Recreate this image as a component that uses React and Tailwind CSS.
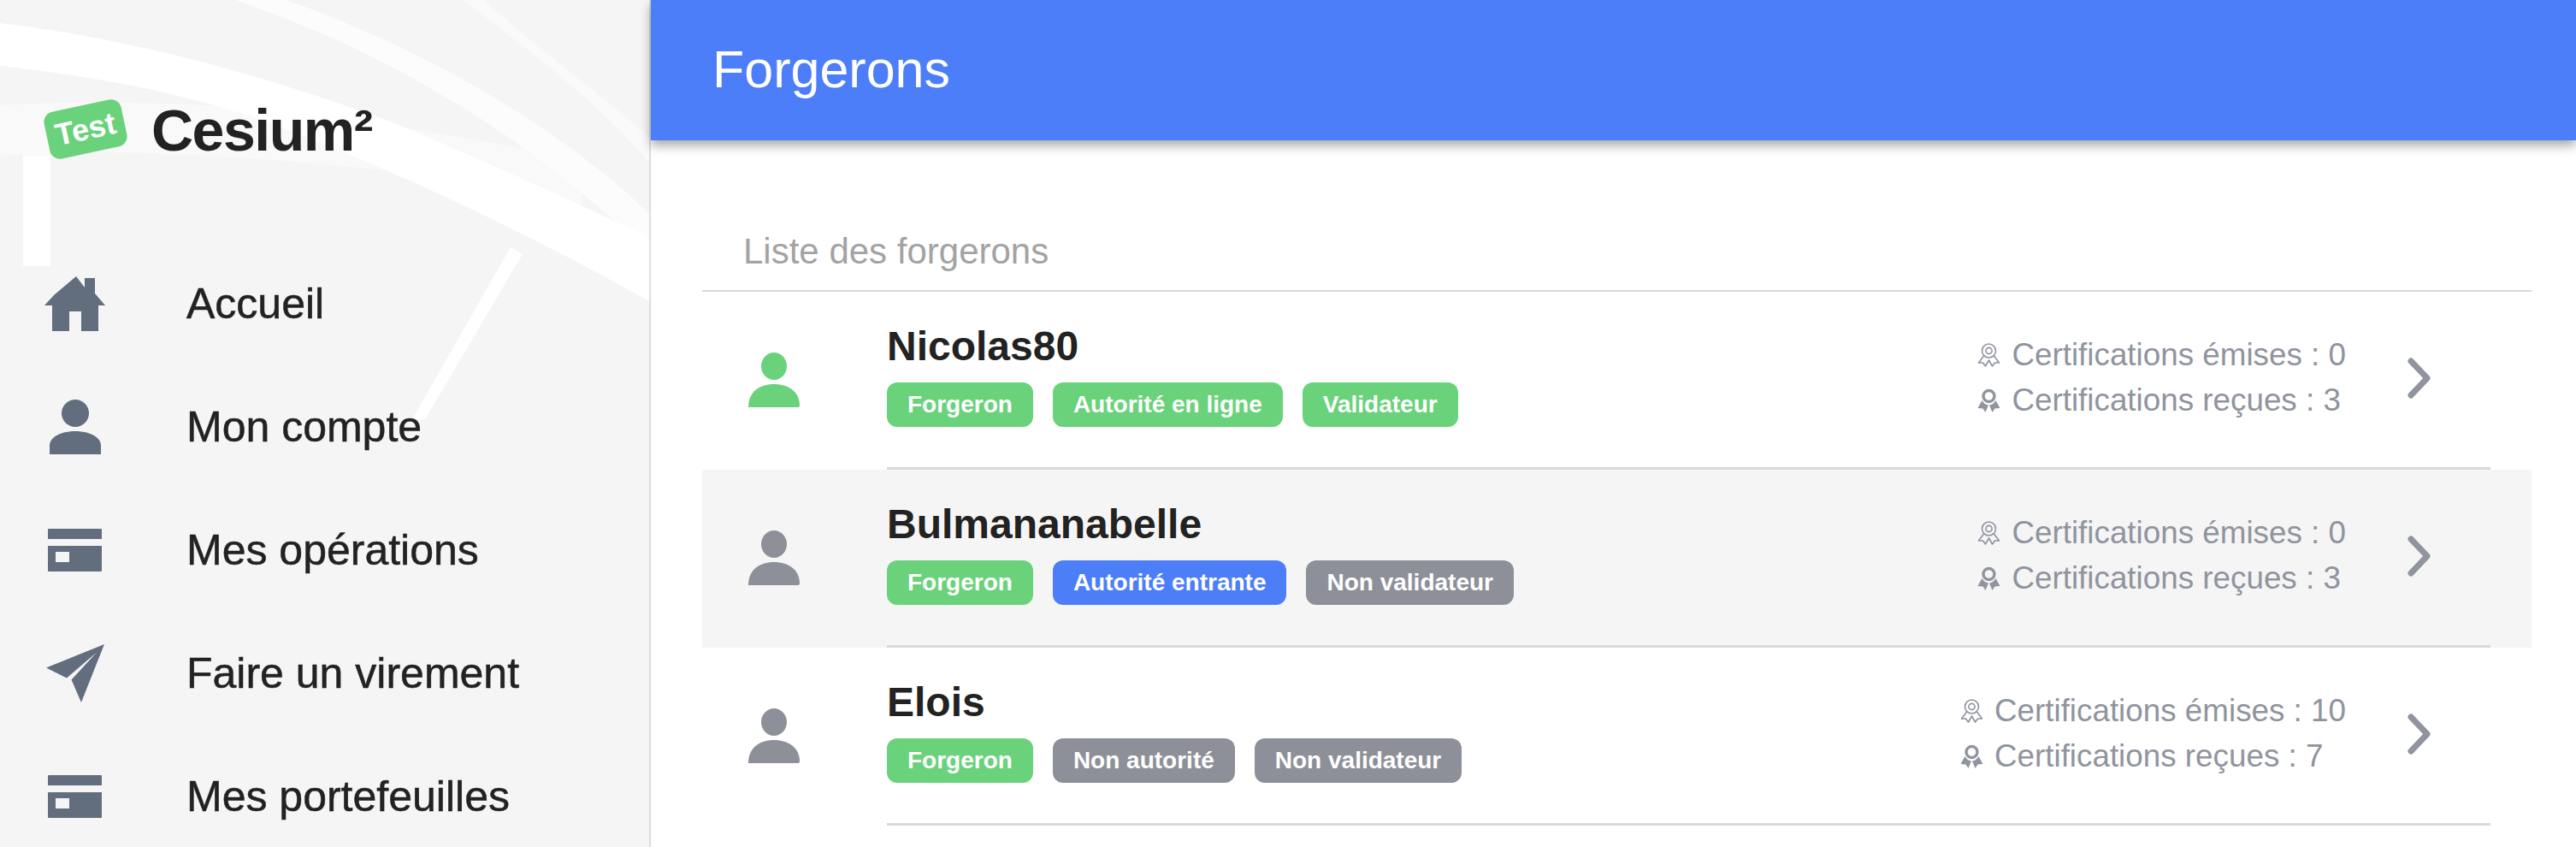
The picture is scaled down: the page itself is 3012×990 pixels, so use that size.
import React from "react";

const navItems = [
  { label: "Accueil", icon: "home" },
  { label: "Mon compte", icon: "person" },
  { label: "Mes opérations", icon: "card" },
  { label: "Faire un virement", icon: "plane" },
  { label: "Mes portefeuilles", icon: "card" },
];

const members = [
  {
    name: "Nicolas80",
    active: true,
    badges: [
      { text: "Forgeron", color: "bg-[#69d27b]" },
      { text: "Autorité en ligne", color: "bg-[#69d27b]" },
      { text: "Validateur", color: "bg-[#69d27b]" },
    ],
    sent: 0,
    received: 3,
  },
  {
    name: "Bulmananabelle",
    highlight: true,
    badges: [
      { text: "Forgeron", color: "bg-[#69d27b]" },
      { text: "Autorité entrante", color: "bg-[#4c7ef8]" },
      { text: "Non validateur", color: "bg-[#8e9099]" },
    ],
    sent: 0,
    received: 3,
  },
  {
    name: "Elois",
    badges: [
      { text: "Forgeron", color: "bg-[#69d27b]" },
      { text: "Non autorité", color: "bg-[#8e9099]" },
      { text: "Non validateur", color: "bg-[#8e9099]" },
    ],
    sent: 10,
    received: 7,
  },
];

const NavIcon = ({ type }) => {
  if (type === "home") {
    return (
      <svg width="71" height="64" viewBox="0 0 71 64" fill="#626e7e">
        <path d="M37 0L47 13V2H59V20L71 34H63V64H43V41H29V64H9V34H0L11 22Z" />
      </svg>
    );
  }
  if (type === "person") {
    return (
      <svg width="60" height="64" viewBox="0 0 60 64" fill="#626e7e">
        <ellipse cx="30" cy="16" rx="16" ry="16" />
        <path d="M0 64V54C0 44 13 37 30 37S60 44 60 54V64Z" />
      </svg>
    );
  }
  if (type === "plane") {
    return (
      <svg width="68" height="68" viewBox="0 0 68 68" fill="#626e7e">
        <path d="M68 0L0 27.5L24 39.5L59 9.5L29.5 41.5L41 68Z" />
      </svg>
    );
  }
  return (
    <svg width="63" height="50" viewBox="0 0 63 50" fill="#626e7e">
      <path d="M1 0H62A1 1 0 0 1 63 1V12H0V1A1 1 0 0 1 1 0Z" />
      <path fillRule="evenodd" d="M0 20H63V49A1 1 0 0 1 62 50H1A1 1 0 0 1 0 49ZM9 27V39H25V27Z" />
    </svg>
  );
};

const SidebarArt = () => (
  <svg className="absolute top-0 left-0" width="759" height="500" viewBox="0 0 759 500">
    <path d="M0 123C110 116 240 120 357 133C470 146 590 170 684 187L680 240L459 200C306 184 153 172 0 182Z" fill="#f9f9f9" />
    <path d="M541 0C620 60 700 120 759 190V160C690 100 620 50 566 0Z" fill="#fafafa" />
    <path d="M275 0C400 43 561 117 724 263L759 290V250C640 133 459 43 334 0Z" fill="#fcfcfc" />
    <path d="M0 27C153 45 306 87 459 143C612 207 700 250 759 277V352C612 270 459 197 306 140C200 105 100 88 0 77Z" fill="#ffffff" />
    <path d="M27 182H59V311H27Z" fill="#ffffff" />
    <path d="M27 143H59V182H27Z" fill="#fafafa" />
    <path d="M597 289L611 297L497 490H482Z" fill="#ffffff" />
  </svg>
);

const RibbonOutline = () => (
  <svg width="27" height="28" viewBox="0 0 26 28" fill="none" stroke="#90949e" strokeWidth="1.6" strokeLinejoin="round">
    <circle cx="13" cy="9" r="8" />
    <circle cx="13" cy="9" r="3.6" />
    <path d="M7 15L1 23L6 23L9 27L13 20L17 27L20 23L25 23L19 15" />
  </svg>
);

const RibbonSolid = () => (
  <svg width="27" height="28" viewBox="0 0 26 28" fill="none">
    <circle cx="13" cy="9" r="6.5" stroke="#90949e" strokeWidth="3.4" />
    <path d="M5 14L0 23L6 23.5L9 28L12.5 19.5C9.5 19.5 7 17 5 14ZM21 14L26 23L20 23.5L17 28L13.5 19.5C16.5 19.5 19 17 21 14Z" fill="#90949e" />
  </svg>
);

const Member = ({ member }) => (
  <div className={`flex h-[208px] ${member.highlight ? "bg-[#f5f5f5]" : ""}`}>
    <div className="flex w-[216px] shrink-0 items-center pb-[2px] pl-[54px]">
      <svg width="60" height="64" viewBox="0 0 60 64" fill={member.active ? "#69d27b" : "#8e9099"}>
        <ellipse cx="30" cy="16" rx="15" ry="16" />
        <path d="M0 64C0 46 13 37 30 37S60 46 60 62C60 63 59 64 58 64Z" />
      </svg>
    </div>
    <div className="mr-[48px] flex min-w-0 flex-1 items-center border-b-[3px] border-[#d9d9d9] pr-[70px]">
      <div className="flex-1 pb-[14px]">
        <div className="text-[48px] leading-[60px] font-bold text-[#222222]">{member.name}</div>
        <div className="mt-[12px] flex gap-[23px]">
          {member.badges.map((badge) => (
            <span
              key={badge.text}
              className={`flex h-[52px] items-center rounded-[12px] px-[24px] text-[28px] font-bold text-white ${badge.color}`}
            >
              {badge.text}
            </span>
          ))}
        </div>
      </div>
      <div className="mb-[4px] flex flex-col gap-[13px] text-[36.8px] leading-[40px] text-[#90949e]">
        <div className="flex items-center gap-[13px]">
          <RibbonOutline />
          <span>Certifications émises : {member.sent}</span>
        </div>
        <div className="flex items-center gap-[13px]">
          <RibbonSolid />
          <span>Certifications reçues : {member.received}</span>
        </div>
      </div>
      <svg className="mb-[3px] ml-[72px]" width="27" height="48" viewBox="0 0 27 48" fill="none" stroke="#90949e" strokeWidth="7" strokeLinecap="round" strokeLinejoin="round">
        <path d="M4 4L23 24L4 44" />
      </svg>
    </div>
  </div>
);

const App = () => {
  return (
    <div className="flex h-[990px] overflow-hidden bg-white [font-family:'Liberation_Sans',Arial,sans-serif]">
      <aside className="relative w-[761px] shrink-0 overflow-hidden border-r-2 border-[#dcdcdc] bg-[#f5f5f5]">
        <SidebarArt />
        <div className="relative flex h-[283px] items-start pt-[113px] pl-[54px]">
          <span className="mt-[10px] flex h-[56px] w-[92px] -rotate-12 items-center justify-center rounded-[12px] bg-[#69d27b] text-[36px] font-bold text-white">
            Test
          </span>
          <span className="ml-[31px] text-[68px] leading-[78px] font-bold tracking-[-1.5px] text-[#222222]">
            Cesium²
          </span>
        </div>
        <nav className="relative">
          {navItems.map((item) => (
            <div key={item.label} className="flex h-[144px] items-center">
              <div className="w-[218px] shrink-0 pl-[52px]">
                <div className="flex w-[71px] justify-center">
                  <NavIcon type={item.icon} />
                </div>
              </div>
              <span className="text-[50px] text-[#222222] [-webkit-text-stroke:0.5px_#222222]">{item.label}</span>
            </div>
          ))}
        </nav>
      </aside>
      <main className="min-w-0 flex-1">
        <header className="relative flex h-[164px] items-center bg-[#4c7efa] pl-[72px] shadow-[0_6px_12px_rgba(0,0,0,0.35)]">
          <h1 className="text-[61px] text-white">Forgerons</h1>
        </header>
        <section className="mr-[52px] ml-[60px] pt-[105px]">
          <div className="flex h-[72px] items-center border-b-2 border-[#d9d9d9] pb-[22px] pl-[48px] text-[42px] text-[#a3a3a3]">
            Liste des forgerons
          </div>
          {members.map((member) => (
            <Member key={member.name} member={member} />
          ))}
        </section>
      </main>
    </div>
  );
};

export default App;
